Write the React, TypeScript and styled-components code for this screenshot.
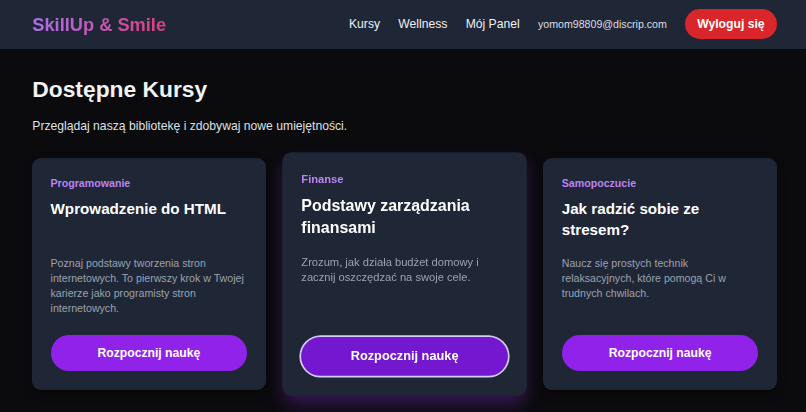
import React from 'react'
import styled, { createGlobalStyle, css } from 'styled-components'

const GlobalStyle = createGlobalStyle`
  html, body {
    margin: 0;
    padding: 0;
    background: #0b0b0d;
  }
  body {
    font-family: 'Liberation Sans', Arial, Helvetica, sans-serif;
    color: #f3f4f6;
    min-height: 412px;
  }
  * {
    box-sizing: border-box;
  }
`

const Header = styled.header`
  display: flex;
  align-items: center;
  justify-content: space-between;
  background: #1f2636;
  padding: 9.1px 29.3px 9.1px 32.3px;
`

const Logo = styled.div`
  font-size: 18.24px;
  line-height: 27px;
  font-weight: 700;
  background: linear-gradient(to right, #ae6fea, #db3f7c);
  -webkit-background-clip: text;
  background-clip: text;
  -webkit-text-fill-color: transparent;
`

const Nav = styled.nav`
  display: flex;
  align-items: center;
  gap: 18.24px;
`

const NavLink = styled.a`
  color: #eef0f4;
  font-size: 12.16px;
  line-height: 18.24px;
  text-decoration: none;
  cursor: pointer;
`

const Email = styled.span`
  color: #dcdfe4;
  font-size: 10.64px;
  line-height: 15.2px;
`

const LogoutButton = styled.button`
  font-family: inherit;
  border: none;
  background: #d9262a;
  color: #ffffff;
  font-weight: 700;
  font-size: 12.16px;
  line-height: 18.24px;
  padding: 6.08px 12.16px;
  border-radius: 999px;
  cursor: pointer;
`

const Main = styled.main`
  padding: 27.8px 29.3px 24px 32.3px;
`

const Heading = styled.h1`
  margin: 0 0 12.9px;
  font-size: 22.8px;
  line-height: 27.36px;
  font-weight: 700;
  color: #f2f3f5;
`

const Subtitle = styled.p`
  margin: 0 0 23.4px;
  font-size: 12.16px;
  line-height: 18.24px;
  color: #dfe1e5;
`

const Grid = styled.div`
  display: grid;
  grid-template-columns: repeat(3, 1fr);
  gap: 22.4px;
`

const Card = styled.div<{ $active?: boolean }>`
  display: flex;
  flex-direction: column;
  background: #1f2636;
  border-radius: 9px;
  padding: 18.24px 18.24px 19px;
  box-shadow: 0 4px 10px rgba(0, 0, 0, 0.3);
  ${p => p.$active && css`
    position: relative;
    z-index: 1;
    transform: scale(1.05);
    box-shadow: 0 9px 16px -2px rgba(147, 51, 234, 0.32);
  `}
`

const Category = styled.span`
  font-size: 10.64px;
  line-height: 15.2px;
  font-weight: 700;
  color: #bb84f2;
  margin-bottom: 6.08px;
`

const Title = styled.h3`
  margin: 0 0 9.12px;
  height: 48.64px;
  font-size: 15.2px;
  line-height: 21.28px;
  font-weight: 700;
  color: #ffffff;
`

const Description = styled.p`
  flex: 1;
  margin: 0 0 18.24px;
  font-size: 10.64px;
  line-height: 15.2px;
  color: #9ca3af;
`

const StartButton = styled.button<{ $active?: boolean }>`
  font-family: inherit;
  width: 100%;
  border: none;
  border-radius: 999px;
  background: #9122ea;
  color: #ffffff;
  font-weight: 700;
  font-size: 12.16px;
  line-height: 18.24px;
  padding: 9.12px 0;
  cursor: pointer;
  ${p => p.$active && css`
    background: #7418d0;
    box-shadow: 0 0 0 1.6px #d2cef3;
  `}
`

const courses = [
  {
    category: 'Programowanie',
    title: 'Wprowadzenie do HTML',
    description:
      'Poznaj podstawy tworzenia stron internetowych. To pierwszy krok w Twojej karierze jako programisty stron internetowych.',
  },
  {
    category: 'Finanse',
    title: 'Podstawy zarządzania finansami',
    description: 'Zrozum, jak działa budżet domowy i zacznij oszczędzać na swoje cele.',
    active: true,
  },
  {
    category: 'Samopoczucie',
    title: 'Jak radzić sobie ze stresem?',
    description: 'Naucz się prostych technik relaksacyjnych, które pomogą Ci w trudnych chwilach.',
  },
]

export default function App() {
  return (
    <>
      <GlobalStyle />
      <Header>
        <Logo>SkillUp &amp; Smile</Logo>
        <Nav>
          <NavLink>Kursy</NavLink>
          <NavLink>Wellness</NavLink>
          <NavLink>Mój Panel</NavLink>
          <Email>yomom98809@discrip.com</Email>
          <LogoutButton>Wyloguj się</LogoutButton>
        </Nav>
      </Header>
      <Main>
        <Heading>Dostępne Kursy</Heading>
        <Subtitle>Przeglądaj naszą bibliotekę i zdobywaj nowe umiejętności.</Subtitle>
        <Grid>
          {courses.map(c => (
            <Card key={c.title} $active={c.active}>
              <Category>{c.category}</Category>
              <Title>{c.title}</Title>
              <Description>{c.description}</Description>
              <StartButton $active={c.active}>Rozpocznij naukę</StartButton>
            </Card>
          ))}
        </Grid>
      </Main>
    </>
  )
}
